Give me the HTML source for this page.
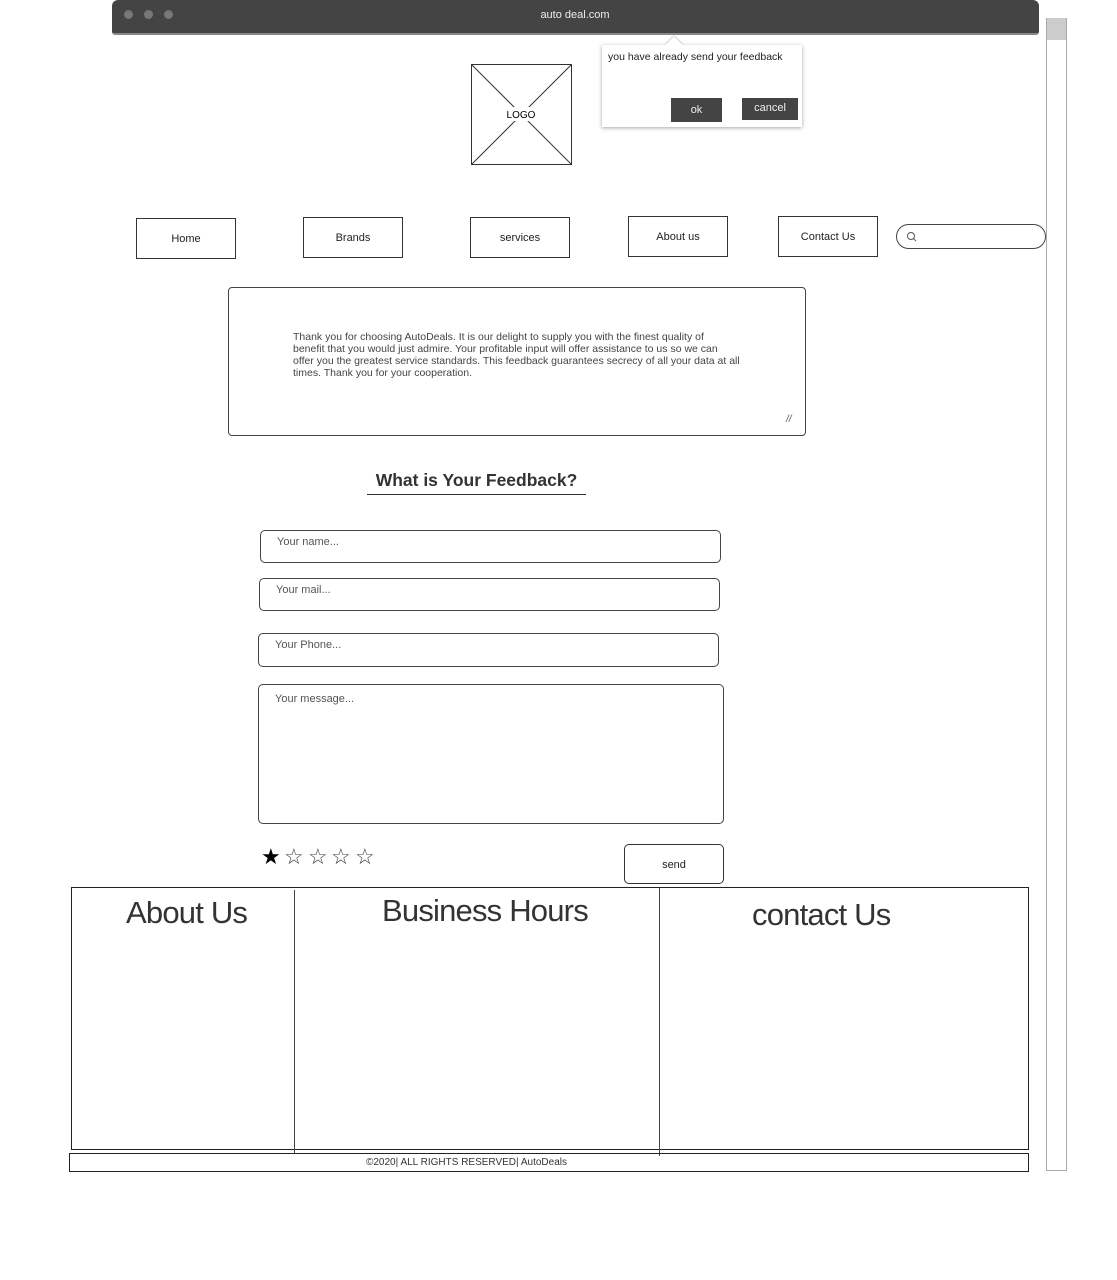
<!DOCTYPE html>
<html><head><meta charset="utf-8"><style>
*{box-sizing:border-box;margin:0;padding:0}
body{width:1117px;height:1280px;background:#fff;position:relative;font-family:"Liberation Sans",sans-serif;color:#222;overflow:hidden}
.a{position:absolute}
.nav{position:absolute;border:1px solid #333;background:#fff;font-size:11px;display:flex;align-items:center;justify-content:center;width:100px;height:41px}
.inp{position:absolute;border:1px solid #444;border-radius:5px;font-size:11px;color:#555;padding:5px 16px}
.h{position:absolute;font-size:31px;color:#333;letter-spacing:-0.8px}
.st{position:absolute;top:845px;font-size:22px;line-height:24px;color:#444}
</style></head><body>
<div class="a" style="left:112px;top:0;width:927px;height:35px;background:#444;border-radius:6px 6px 3px 3px;border-bottom:2px solid #888"></div>
<div class="a" style="left:124px;top:10px;width:9px;height:9px;border-radius:50%;background:#777"></div>
<div class="a" style="left:144px;top:10px;width:9px;height:9px;border-radius:50%;background:#777"></div>
<div class="a" style="left:164px;top:10px;width:9px;height:9px;border-radius:50%;background:#777"></div>
<div class="a" style="left:0;width:1150px;top:9px;text-align:center;color:#eee;font-size:11px">auto deal.com</div>
<div class="a" style="left:1046px;top:18px;width:21px;height:1153px;border:1px solid #aaa;border-top:none"></div>
<div class="a" style="left:1047px;top:18px;width:19px;height:22px;background:#ccc"></div>

<svg class="a" style="left:471px;top:64px" width="101" height="101"><rect x="0.5" y="0.5" width="100" height="100" fill="#fff" stroke="#333"/><line x1="0" y1="0" x2="101" y2="101" stroke="#333"/><line x1="101" y1="0" x2="0" y2="101" stroke="#333"/><rect x="34" y="43" width="32" height="14" fill="#fff"/><text x="50" y="54" font-size="10" text-anchor="middle" font-family="Liberation Sans">LOGO</text></svg>

<div class="a" style="left:602px;top:45px;width:200px;height:82px;background:#fff;box-shadow:0 1px 4px rgba(0,0,0,.35)"></div>
<div class="a" style="left:668px;top:39px;width:12px;height:12px;background:#fff;transform:rotate(45deg);box-shadow:-1px -1px 2px rgba(0,0,0,.2)"></div>
<div class="a" style="left:608px;top:51px;font-size:10.5px;color:#222">you have already send your feedback</div>
<div class="a" style="left:671px;top:98px;width:51px;height:24px;background:#444;color:#eee;font-size:11px;text-align:center;line-height:24px">ok</div>
<div class="a" style="left:742px;top:98px;width:56px;height:22px;background:#444;color:#eee;font-size:11px;text-align:center;line-height:21px">cancel</div>

<div class="nav" style="left:136px;top:218px">Home</div>
<div class="nav" style="left:303px;top:217px">Brands</div>
<div class="nav" style="left:470px;top:217px">services</div>
<div class="nav" style="left:628px;top:216px">About us</div>
<div class="nav" style="left:778px;top:216px">Contact Us</div>
<div class="a" style="left:896px;top:224px;width:150px;height:25px;border:1px solid #444;border-radius:13px"></div>
<svg class="a" style="left:906px;top:231px" width="12" height="12"><circle cx="5" cy="5" r="3.5" fill="none" stroke="#555"/><line x1="7.5" y1="7.5" x2="10" y2="10" stroke="#555"/></svg>

<div class="a" style="left:228px;top:287px;width:578px;height:149px;border:1px solid #444;border-radius:4px"></div>
<div class="a" style="left:293px;top:331px;width:520px;font-size:10.5px;line-height:12px;color:#444;white-space:nowrap">Thank you for choosing AutoDeals. It is our delight to supply you with the finest quality of<br>benefit that you would just admire. Your profitable input will offer assistance to us so we can<br>offer you the greatest service standards. This feedback guarantees secrecy of all your data at all<br>times. Thank you for your cooperation.</div>
<div class="a" style="left:786px;top:414px;font-size:10px;color:#555;font-style:italic">//</div>

<div class="a" style="left:367px;top:470px;width:219px;text-align:center;font-weight:bold;font-size:17.5px;color:#333">What is Your Feedback?</div>
<div class="a" style="left:367px;top:494px;width:219px;height:1px;background:#333"></div>

<div class="inp" style="left:260px;top:530px;width:461px;height:33px">Your name...</div>
<div class="inp" style="left:259px;top:578px;width:461px;height:33px">Your mail...</div>
<div class="inp" style="left:258px;top:633px;width:461px;height:34px">Your Phone...</div>
<div class="inp" style="left:258px;top:684px;width:466px;height:140px;padding-top:8px">Your message...</div>

<div class="st" style="left:261px;color:#000">★</div>
<div class="st" style="left:284px">☆</div>
<div class="st" style="left:308px">☆</div>
<div class="st" style="left:331px">☆</div>
<div class="st" style="left:355px">☆</div>
<div class="a" style="left:624px;top:844px;width:100px;height:40px;border:1px solid #333;border-radius:5px;font-size:11px;text-align:center;line-height:40px">send</div>

<div class="a" style="left:71px;top:887px;width:958px;height:263px;border:1px solid #222"></div>
<div class="a" style="left:294px;top:890px;width:1px;height:263px;background:#444"></div>
<div class="a" style="left:659px;top:888px;width:1px;height:268px;background:#444"></div>
<div class="h" style="left:126px;top:895px">About Us</div>
<div class="h" style="left:382px;top:893px">Business Hours</div>
<div class="h" style="left:752px;top:897px">contact Us</div>
<div class="a" style="left:69px;top:1153px;width:960px;height:19px;border:1px solid #222"></div>
<div class="a" style="left:366px;top:1157px;font-size:10px;color:#333">©2020| ALL RIGHTS RESERVED| AutoDeals</div>
</body></html>
